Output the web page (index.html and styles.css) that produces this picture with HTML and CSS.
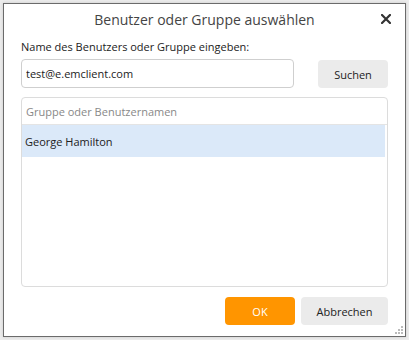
FILE: index.html
```html
<!DOCTYPE html>
<html lang="de">
<head>
  <meta charset="UTF-8" />
  <title>Benutzer oder Gruppe auswählen</title>
  <link rel="stylesheet" href="styles.css">
</head>
<body>
  <div class="dialog">
    <div class="dialog-title">
      <span>Benutzer oder Gruppe auswählen</span>
      <svg class="close" width="10" height="10" viewBox="0 0 10 10">
        <path d="M1 1 L9 9 M9 1 L1 9" stroke="#333" stroke-width="2.2" stroke-linecap="square"/>
      </svg>
    </div>
    <div class="dialog-body">
      <label class="field-label" for="name-input">Name des Benutzers oder Gruppe eingeben:</label>
      <div class="search-row">
        <input type="text" id="name-input" value="test@e.emclient.com">
        <button class="btn btn-grey search-btn">Suchen</button>
      </div>
      <div class="result-list">
        <div class="list-header">Gruppe oder Benutzernamen</div>
        <div class="list-item selected">George Hamilton</div>
      </div>
      <div class="dialog-actions">
        <button class="btn btn-orange">OK</button>
        <button class="btn btn-grey cancel-btn">Abbrechen</button>
      </div>
    </div>
    <svg class="grip" width="9" height="9" viewBox="0 0 9 9">
      <rect x="6" y="0" width="2" height="2" fill="#bbb"/>
      <rect x="3" y="3" width="2" height="2" fill="#bbb"/>
      <rect x="6" y="3" width="2" height="2" fill="#bbb"/>
      <rect x="0" y="6" width="2" height="2" fill="#bbb"/>
      <rect x="3" y="6" width="2" height="2" fill="#bbb"/>
      <rect x="6" y="6" width="2" height="2" fill="#bbb"/>
    </svg>
  </div>
</body>
</html>
```

FILE: styles.css
```css
* { box-sizing: border-box; margin: 0; padding: 0; }
body {
  font-family: 'Open Sans', 'Noto Sans', sans-serif;
  background-color: #ececec;
  color: #222;
  width: 409px;
  height: 340px;
  overflow: hidden;
}
.dialog {
  position: relative;
  margin: 3px 0 0 3px;
  width: 403px;
  height: 334px;
  background-color: white;
  border: 1px solid #6b6b6b;
  box-shadow: 0 0 3px rgba(0, 0, 0, 0.15);
  display: flex;
  flex-direction: column;
}
.dialog-title {
  position: relative;
  height: 31px;
  display: flex;
  align-items: center;
  justify-content: center;
  font-size: 14px;
  color: #444;
}
.close {
  position: absolute;
  right: 14px;
  top: 10px;
}
.dialog-body {
  flex: 1;
  padding: 4px 17px 0 17px;
  display: flex;
  flex-direction: column;
}
.field-label {
  font-size: 11px;
  line-height: 16px;
  color: #222;
  margin-bottom: 4px;
}
.search-row {
  display: flex;
  justify-content: space-between;
  align-items: flex-start;
}
#name-input {
  width: 273px;
  height: 29px;
  border: 1px solid #cfcfcf;
  border-radius: 4px;
  padding: 0 4px;
  font-family: inherit;
  font-size: 11px;
  color: #222;
  outline: none;
}
.btn {
  border: none;
  border-radius: 4px;
  height: 28px;
  font-family: inherit;
  font-size: 11px;
  cursor: pointer;
}
.btn-grey { background-color: #ebebeb; color: #222; }
.btn-orange { background-color: #ff9500; color: white; width: 70px; }
.search-btn { width: 70px; margin-top: 1px; }
.result-list {
  margin-top: 9px;
  width: 367px;
  height: 190px;
  border: 1px solid #dcdcdc;
  border-radius: 4px;
  overflow: hidden;
}
.list-header {
  height: 27px;
  padding: 0 4px;
  display: flex;
  align-items: center;
  font-size: 11px;
  color: #888;
  border-bottom: 1px solid #e4e4e4;
}
.list-item {
  height: 32px;
  margin-right: 2px;
  padding: 0 3px;
  display: flex;
  align-items: center;
  font-size: 11px;
  color: #222;
}
.list-item.selected { background-color: #dbe9f9; }
.dialog-actions {
  margin-top: 10px;
  display: flex;
  justify-content: flex-end;
  gap: 6px;
}
.cancel-btn { width: 87px; }
.grip {
  position: absolute;
  right: 1px;
  bottom: 1px;
}
```
